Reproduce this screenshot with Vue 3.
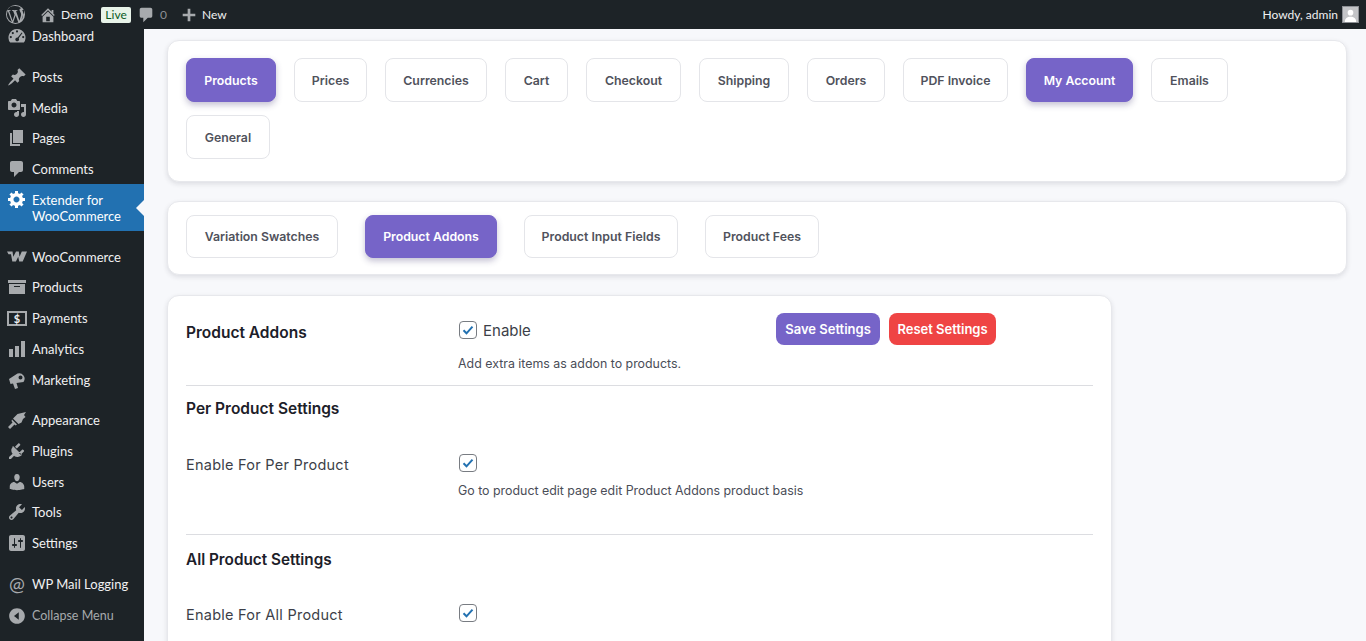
<template>
  <div class="shell">
    <!-- 顶部工具栏 -->
    <header class="adminbar">
      <div class="bar-left">
        <svg class="bar-wp" viewBox="0 0 20 20"><path fill-rule="evenodd" :d="icons.wp" /></svg>
        <span class="bar-item site">
          <svg class="bar-ico" viewBox="0 0 20 20"><path :d="icons.home" /></svg>
          Demo
        </span>
        <span class="live">Live</span>
        <span class="bar-item comments">
          <svg class="bar-ico" viewBox="0 0 20 20"><path :d="icons.comment" /></svg>
          <span class="count">0</span>
        </span>
        <span class="bar-item new">
          <svg class="bar-ico" viewBox="0 0 20 20"><path :d="icons.plus" /></svg>
          New
        </span>
      </div>
      <div class="bar-right">
        <span>Howdy, admin</span>
        <span class="avatar">
          <svg viewBox="0 0 16 16"><circle cx="8" cy="6" r="3" /><path d="M2 16c0-4 2.500-5.500 6-5.500s6 1.500 6 5.500z" /></svg>
        </span>
      </div>
    </header>

    <div class="body">
      <!-- 左侧菜单 -->
      <nav class="sidebar">
        <div
          v-for="item in menu"
          :key="item.label"
          class="menu-item"
          :class="{ current: item.current, gap: item.gap, collapse: item.collapse }"
        >
          <span v-if="item.at" class="menu-ico at">@</span>
          <span v-else-if="item.pay" class="menu-ico pay"><span>$</span></span>
          <svg v-else class="menu-ico" viewBox="0 0 20 20"><path fill-rule="evenodd" :d="icons[item.icon]" /></svg>
          <span class="menu-label">{{ item.label }}</span>
        </div>
      </nav>

      <main class="content">
        <section class="card tabs">
          <button
            v-for="t in tabsTop"
            :key="t.name"
            class="tab"
            :class="{ active: t.on }"
            :style="{ width: t.w + 'px' }"
          >{{ t.name }}</button>
        </section>
        <section class="card tabs second">
          <button
            v-for="t in tabsSub"
            :key="t.name"
            class="tab"
            :class="{ active: t.on }"
            :style="{ width: t.w + 'px' }"
          >{{ t.name }}</button>
        </section>

        <section class="card form">
          <div class="row first">
            <h2 class="title">Product Addons</h2>
            <div class="control">
              <div class="enable-line">
                <label class="check-line"><span class="check"><svg viewBox="0 0 16 16"><path d="M3.500 8.300l3 3 6-6.600" /></svg></span>Enable</label>
                <div class="actions">
                  <button class="btn save">Save Settings</button>
                  <button class="btn reset">Reset Settings</button>
                </div>
              </div>
              <p class="desc">Add extra items as addon to products.</p>
            </div>
          </div>
          <hr />
          <h3 class="title sub">Per Product Settings</h3>
          <div class="row option">
            <span class="opt-label">Enable For Per Product</span>
            <div class="control">
              <span class="check"><svg viewBox="0 0 16 16"><path d="M3.500 8.300l3 3 6-6.600" /></svg></span>
              <p class="desc">Go to product edit page edit Product Addons product basis</p>
            </div>
          </div>
          <hr class="second-rule" />
          <h3 class="title sub lower">All Product Settings</h3>
          <div class="row option last">
            <span class="opt-label">Enable For All Product</span>
            <div class="control">
              <span class="check"><svg viewBox="0 0 16 16"><path d="M3.500 8.300l3 3 6-6.600" /></svg></span>
            </div>
          </div>
        </section>
      </main>
    </div>
  </div>
</template>

<script setup>
const icons = {
  wp: 'M10 0a10 10 0 1 0 0 20 10 10 0 0 0 0-20zm0 1a9 9 0 0 1 6.100 2.400c-1.100-.1-1.900.7-1.900 1.700 0 .9.500 1.600 1 2.500.4.700.7 1.500.7 2.700 0 .8-.3 1.800-.8 3.100l-1 3.300-3.500-10.500c.6 0 1.100-.1 1.100-.1.500-.1.500-.8 0-.8 0 0-1.600.1-2.600.1s-2.500-.1-2.500-.1c-.6 0-.6.800-.1.800l1 .1 1.500 4.100-2.100 6.300-3.500-10.400c.6 0 1.100-.1 1.100-.1.500-.1.500-.8 0-.8 0 0-1.600.1-2.600.1h-.6A9 9 0 0 1 10 1zM1.900 6.300l4.300 11.900A9 9 0 0 1 1.900 6.300zM10.200 10.800l2.700 7.400.1.200a9 9 0 0 1-5.500.1zM17.100 5.200c1.300 2.400 1.500 6.800-.9 10.400l2.500-7.300c.3-1 .5-2 .4-3.100z',
  home: 'M16 8.500l1.530 1.530-1.060 1.060L10 4.620l-6.470 6.470-1.060-1.060L10 2.500l4 4v-2h2v4zm-6-2.460l6 5.990V18H4v-5.970zM12 17v-5H8v5h4z',
  comment: 'M5 2h10c1.100 0 2 .9 2 2v7c0 1.100-.9 2-2 2h-3l-5 5v-5H5c-1.100 0-2-.9-2-2V4c0-1.100.9-2 2-2z',
  plus: 'M17 8.500v3h-5.500V17h-3v-5.500H3v-3h5.500V3h3v5.500z',
  dashboard: 'M10 3a8.500 8.500 0 0 0-6.800 13.600h13.600A8.500 8.500 0 0 0 10 3zM10 4.300a1.100 1.100 0 1 1 0 2.200 1.100 1.100 0 0 1 0-2.200zM5.800 6a1.100 1.100 0 1 1 0 2.200 1.100 1.100 0 0 1 0-2.200zM3.800 10a1.100 1.100 0 1 1 0 2.200 1.100 1.100 0 0 1 0-2.200zM14.700 6.500l.8.600-3.800 5.200a1.900 1.900 0 1 1-1-.7zM16.200 10a1.100 1.100 0 1 1 0 2.200 1.100 1.100 0 0 1 0-2.200z',
  pin: 'M10.440 3.020l1.820-1.820 6.360 6.350-1.830 1.820c-1.050-.68-2.480-.57-3.410.36l-.75.750c-.92.930-1.040 2.350-.35 3.410l-1.830 1.820-2.410-2.410-2.800 2.790c-.42.420-3.380 2.710-3.800 2.290s1.860-3.390 2.280-3.810l2.790-2.790L4.100 9.360l1.830-1.820c1.050.69 2.480.57 3.400-.36l.75-.75c.93-.92 1.050-2.350.36-3.410z',
  media: 'M13 11V4c0-.55-.45-1-1-1h-1.670L9 1H5L3.670 3H2c-.55 0-1 .45-1 1v7c0 .55.45 1 1 1h10c.55 0 1-.45 1-1zM7 4.500c1.380 0 2.500 1.120 2.500 2.500S8.380 9.500 7 9.500 4.500 8.380 4.500 7 5.620 4.500 7 4.500zM14 6h5v10.500c0 1.380-1.120 2.500-2.500 2.500S14 17.880 14 16.500s1.120-2.500 2.500-2.500c.17 0 .34.020.5.050V9h-3V6zm-4 8.050V13h2v3.500c0 1.380-1.120 2.500-2.500 2.500S7 17.880 7 16.500 8.120 14 9.500 14c.17 0 .34.020.5.050z',
  pages: 'M6 15V2h10v13H6zm-1 1h8v2H3V5h2v11z',
  comment2: 'M5 2h9c1.100 0 2 .9 2 2v7c0 1.100-.9 2-2 2h-2l-5 5v-5H5c-1.100 0-2-.9-2-2V4c0-1.100.9-2 2-2z',
  gear: 'M18 12h-2.180c-.17.7-.44 1.350-.81 1.930l1.540 1.540-2.100 2.100-1.540-1.540c-.58.36-1.230.63-1.910.79V19H8v-2.180c-.68-.16-1.330-.43-1.910-.79l-1.540 1.540-2.120-2.120 1.540-1.540c-.36-.58-.63-1.230-.79-1.910H1V9.030h2.170c.16-.7.44-1.350.8-1.940L2.430 5.550l2.100-2.100 1.540 1.540c.58-.37 1.240-.64 1.930-.81V2h3v2.180c.68.16 1.330.43 1.910.79l1.540-1.540 2.120 2.120-1.540 1.540c.36.59.64 1.240.8 1.940H18V12zm-8.500 1.500c1.660 0 3-1.340 3-3s-1.340-3-3-3-3 1.340-3 3 1.340 3 3 3z',
  woo: 'M0 4.500h5.500l.8 5.200L9 4.500h2.800l.7 5.200 2.300-5.200H20l-4.300 10h-3.500l-1-4.800-2.300 4.800H5.300L4 7.200H1.500z',
  archive: 'M19 3v3H1V3h18zM2 7h16v10H2V7zm11 3V9H7v1h6z',
  chart: 'M18 18V2h-4v16h4zm-6 0V7H8v11h4zm-6 0v-8H2v8h4z',
  megaphone: 'M2 9L10.500 3.500A5.500 5.500 0 0 1 16.500 12L9.500 13L11 18L8 19L6 13.600L3.500 14ZM13.500 5.500a2 2 0 1 0 0 4 2 2 0 0 0 0-4z',
  brush: 'M6 8.500L10.500 4L19 2L17 5L18.500 7L16 9L14.500 12.500L11.500 14ZM5 9.500L10 14.500L8.500 15.500L7.500 14.500L3 19L1 17L5.500 12.500L4.500 11Z',
  plugin: 'M13.110 4.360L9.870 7.600 8 5.730l3.240-3.240c.35-.34 1.050-.2 1.560.32.520.51.660 1.210.31 1.550zm-8 1.770l.910-1.120 9.010 9.010-1.190.84c-.71.710-2.110 1.130-2.880 1.130-1.080 0-2.760-.23-3.870-1.340L3.960 18H2v-2l3.660-3.150c-1.100-1.110-1.340-2.560-1.340-3.870 0-.9.600-2.160 1.480-2.850zm11.790 4.480l-3.240 3.240-1.870-1.870 3.240-3.240c.35-.34 1.050-.2 1.560.32.520.51.660 1.210.31 1.550z',
  user: 'M10 9.250c-2.270 0-2.730-3.440-2.730-3.440C7 4.020 7.820 2 9.970 2c2.160 0 2.980 2.020 2.710 3.810 0 0-.41 3.440-2.680 3.440zm0 2.570L12.720 10c2.390 0 4.520 2.330 4.520 4.530v2.490s-3.650 1.130-7.240 1.130c-3.650 0-7.240-1.130-7.240-1.130v-2.490c0-2.250 1.940-4.480 4.470-4.480z',
  tools: 'M16.680 9.770c-1.340 1.340-3.300 1.670-4.950.99l-5.410 6.520c-.99.99-2.590.99-3.580 0s-.99-2.590 0-3.570l6.520-5.420c-.68-1.650-.35-3.610.99-4.950 1.280-1.280 3.120-1.620 4.720-1.060l-2.890 2.890 2.820 2.820 2.860-2.870c.53 1.580.18 3.390-1.080 4.650zM3.810 16.210c.4.390 1.040.39 1.430 0 .4-.4.400-1.040 0-1.440-.39-.39-1.030-.39-1.430 0-.39.400-.39 1.040 0 1.440z',
  settings: 'M18 16V4c0-1.100-.9-2-2-2H4c-1.100 0-2 .9-2 2v12c0 1.100.9 2 2 2h12c1.100 0 2-.9 2-2zM8 11h1c.55 0 1 .45 1 1s-.45 1-1 1H8v1.500c0 .280-.220.500-.5.500s-.5-.220-.5-.5V13H6c-.55 0-1-.45-1-1s.45-1 1-1h1V5.500c0-.280.220-.5.5-.5s.5.220.5.5V11zm5-2h-1c-.55 0-1-.45-1-1s.45-1 1-1h1V5.500c0-.280.220-.5.5-.5s.5.220.5.5V7h1c.55 0 1 .45 1 1s-.45 1-1 1h-1v5.500c0 .280-.220.5-.5.5s-.5-.220-.5-.5V9z',
  collapse: 'M10 2.160c4.330 0 7.840 3.510 7.840 7.840s-3.510 7.840-7.840 7.840S2.160 14.330 2.160 10 5.670 2.160 10 2.160zM11.780 6.220L7 10l4.780 3.780V6.220z',
}

const menu = [
  { label: 'Dashboard', icon: 'dashboard' },
  { label: 'Posts', icon: 'pin', gap: true },
  { label: 'Media', icon: 'media' },
  { label: 'Pages', icon: 'pages' },
  { label: 'Comments', icon: 'comment2' },
  { label: 'Extender for WooCommerce', icon: 'gear', current: true },
  { label: 'WooCommerce', icon: 'woo', gap: true },
  { label: 'Products', icon: 'archive' },
  { label: 'Payments', pay: true },
  { label: 'Analytics', icon: 'chart' },
  { label: 'Marketing', icon: 'megaphone' },
  { label: 'Appearance', icon: 'brush', gap: true },
  { label: 'Plugins', icon: 'plugin' },
  { label: 'Users', icon: 'user' },
  { label: 'Tools', icon: 'tools' },
  { label: 'Settings', icon: 'settings' },
  { label: 'WP Mail Logging', at: true, gap: true },
  { label: 'Collapse Menu', icon: 'collapse', collapse: true },
]

const tabsTop = [
  { name: 'Products', w: 90, on: true },
  { name: 'Prices', w: 73 },
  { name: 'Currencies', w: 102 },
  { name: 'Cart', w: 63 },
  { name: 'Checkout', w: 95 },
  { name: 'Shipping', w: 90 },
  { name: 'Orders', w: 78 },
  { name: 'PDF Invoice', w: 105 },
  { name: 'My Account', w: 107, on: true },
  { name: 'Emails', w: 77 },
  { name: 'General', w: 84 },
]
const tabsSub = [
  { name: 'Variation Swatches', w: 152 },
  { name: 'Product Addons', w: 132, on: true },
  { name: 'Product Input Fields', w: 154 },
  { name: 'Product Fees', w: 114 },
]
</script>

<style scoped>
.shell {
  width: 1366px;
  height: 641px;
  overflow: hidden;
  display: flex;
  flex-direction: column;
  background: #f7f8fb;
  font-family: "Inter", "Noto Sans", sans-serif;
}

/* top bar */
.adminbar {
  position: relative;
  z-index: 2;
  flex: 0 0 29px;
  display: flex;
  justify-content: space-between;
  align-items: center;
  background: #1d2327;
  color: #f0f0f1;
  font-family: "Lato", "Noto Sans", sans-serif;
  font-size: 12px;
  padding: 0 7px 0 6px;
}
.bar-left, .bar-right, .bar-item { display: flex; align-items: center; }
.bar-wp { width: 19px; height: 19px; fill: #a7aaad; margin-right: 14px; }
.bar-ico { width: 18px; height: 18px; fill: #a7aaad; margin-right: 4px; }
.site { margin-right: 8px; }
.live {
  background: #e8f3e9;
  color: #0b5c1f;
  border-radius: 2px;
  width: 30px;
  text-align: center;
  height: 16px;
  line-height: 16px;
  font-size: 12px;
  margin-right: 6px;
}
.count { color: #8c8f94; margin-left: 1px; }
.comments { margin-right: 13px; }
.bar-right { gap: 4px; }
.avatar {
  width: 17px;
  height: 17px;
  background: #c3c4c7;
  border: 1px solid #8c8f94;
  box-sizing: border-box;
  display: block;
}
.avatar svg { display: block; width: 100%; height: 100%; fill: #fff; }

.body { flex: 1; min-height: 0; display: flex; }

/* side menu */
.sidebar {
  flex: 0 0 144px;
  background: #1d2327;
  margin-top: -8px;
  color: #f0f0f1;
  font-family: "Lato", "Noto Sans", sans-serif;
  font-size: 13px;
  line-height: 16px;
}
.menu-item {
  position: relative;
  display: flex;
  align-items: center;
  height: 30.7px;
  padding-left: 7px;
}
.menu-item.gap { margin-top: 10px; }
.menu-ico {
  flex: 0 0 20px;
  width: 20px;
  height: 20px;
  margin-right: 5px;
  fill: #a7aaad;
}
.at { font-size: 19px; color: #a7aaad; text-align: center; line-height: 20px; }
.pay {
  box-sizing: border-box;
  height: 15px;
  border: 2px solid #a7aaad;
  font-size: 11px;
  font-weight: 700;
  line-height: 11px;
  text-align: center;
}
.menu-item.current {
  height: 47px;
  background: #2271b1;
  color: #fff;
}
.menu-item.current .menu-ico { fill: #fff; align-self: flex-start; margin-top: 5px; }
.menu-item.current::after {
  content: "";
  position: absolute;
  right: 0;
  top: 50%;
  margin-top: -8px;
  border: 8px solid transparent;
  border-right-color: #f7f8fb;
}
.collapse { color: #a7aaad; font-size: 12.5px; margin-top: 2px; }

/* content */
.content { flex: 1; min-width: 0; padding: 11px 19px 0 23px; }
.card {
  background: #fff;
  border: 1px solid #e7e8ec;
  border-radius: 12px;
  box-shadow: 0 2px 5px rgba(30, 35, 50, 0.12);
  box-sizing: border-box;
}
.tabs {
  display: flex;
  flex-wrap: wrap;
  gap: 13px 18px;
  padding: 17px 18px 22px;
  margin-bottom: 19px;
}
.tabs.second { padding: 13px 18px 16px; gap: 27px; margin-bottom: 20px; }
.tab {
  height: 44px;
  padding: 0;
  background: #fff;
  border: 1px solid #e4e5e9;
  border-radius: 8px;
  color: #50525c;
  font-family: inherit;
  font-size: 12.3px;
  font-weight: 600;
}
.tab.active {
  background: #7664c8;
  border-color: #7664c8;
  color: #fff;
  box-shadow: 0 3px 6px rgba(60, 50, 110, 0.3);
}
.tabs.second .tab { height: 43px; }

.form {
  width: 945px;
  height: 420px;
  padding: 0 18px;
  color: #1d2327;
}
.row { display: grid; grid-template-columns: 272px 1fr; }
.row.first { padding-top: 17px; height: 89px; box-sizing: border-box; }
.title { margin: 0; font-size: 15.5px; font-weight: 600; color: #1c2029; }
.row.first .title { padding-top: 10px; }
.sub { margin-top: 13px; line-height: 20px; }
.sub.lower { margin-top: 15px; font-size: 15.3px; }
.control { min-width: 0; }
.enable-line { display: flex; height: 32px; align-items: center; }
.check-line { display: flex; align-items: center; width: 318px; padding-top: 2px; font-size: 15px; color: #3c3f48; }
.check-line .check { margin-right: 6px; }
.actions { display: flex; gap: 9px; }
.btn {
  height: 32px;
  padding: 0;
  border: 0;
  border-radius: 8px;
  color: #fff;
  font-family: inherit;
  font-size: 13px;
  font-weight: 600;
}
.save { width: 104px; background: #7664c8; }
.reset { width: 107px; background: #ef4444; }
.check {
  display: block;
  box-sizing: border-box;
  width: 18px;
  height: 18px;
  margin-left: 1px;
  background: #fff;
  border: 1px solid #787c82;
  border-radius: 4px;
}
.check svg { display: block; width: 16px; height: 16px; fill: none; stroke: #2271b1; stroke-width: 2; }
.desc { margin: 0; font-size: 12.4px; line-height: 18px; color: #4a4d57; }
.row.first .desc { margin-top: 10px; }
hr { margin: 0; border: 0; border-top: 1px solid #dcdde1; }
.option { margin-top: 36px; font-size: 14.5px; letter-spacing: 0.25px; color: #3c3f48; }
.option.last { margin-top: 35px; }
.option .check { margin-top: -1px; }
.option .desc { margin-top: 10px; letter-spacing: 0; }
.opt-label { line-height: 18px; padding-top: 1px; }
hr.second-rule { margin-top: 34px; }
</style>
